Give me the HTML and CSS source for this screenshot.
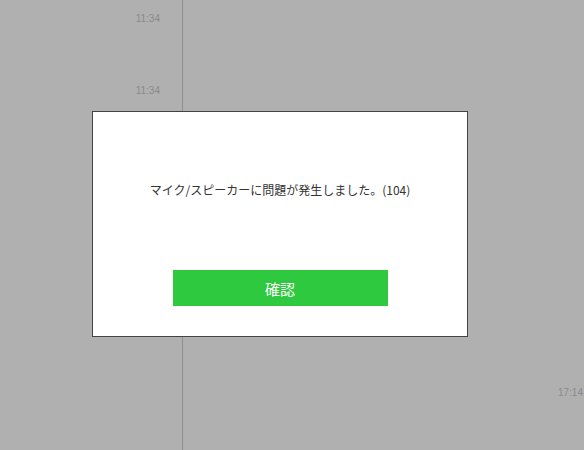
FILE: index.html
```
<!DOCTYPE html>
<html lang="ja">
<head>
<meta charset="utf-8">
<link rel="stylesheet" href="styles.css">
</head>
<body>
<div class="app">
  <div class="list">
    <div class="time t1">11:34</div>
    <div class="time t2">11:34</div>
  </div>
  <div class="main">
    <div class="time t3">17:14</div>
  </div>
</div>
<div class="dialog">
  <p class="msg">マイク/スピーカーに問題が発生しました。(104)</p>
  <button class="ok">確認</button>
</div>
</body>
</html>
```
FILE: styles.css
```
html, body {
  margin: 0;
  padding: 0;
  width: 584px;
  height: 450px;
  overflow: hidden;
  background: #b0b0b0;
  font-family: "Noto Sans CJK JP", "Noto Sans", sans-serif;
}
.app {
  display: flex;
  height: 450px;
}
.list {
  width: 183px;
  border-right: 1px solid #8f8f8f;
  display: flex;
  flex-direction: column;
  align-items: flex-end;
  padding-right: 22px;
  box-sizing: border-box;
}
.main {
  flex: 1;
  display: flex;
  flex-direction: column;
  align-items: flex-end;
}
.time {
  font-family: "Liberation Sans", sans-serif;
  font-size: 10px;
  color: #8a8a8a;
  line-height: 12px;
}
.t1 { margin-top: 13px; }
.t2 { margin-top: 60px; }
.t3 { margin-top: 387px; margin-right: 1px; }
.dialog {
  position: absolute;
  left: 92px;
  top: 111px;
  width: 376px;
  height: 226px;
  box-sizing: border-box;
  background: #fff;
  border: 1px solid #444;
  display: flex;
  flex-direction: column;
  align-items: center;
}
.msg {
  margin: 68px 0 0;
  font-size: 12px;
  line-height: 20px;
  color: #333;
}
.ok {
  margin-top: 70px;
  width: 215px;
  height: 36px;
  border: none;
  background: #2ec93e;
  color: #fff;
  font-family: "Noto Sans CJK JP", sans-serif;
  font-size: 15px;
  padding: 0;
}
```
